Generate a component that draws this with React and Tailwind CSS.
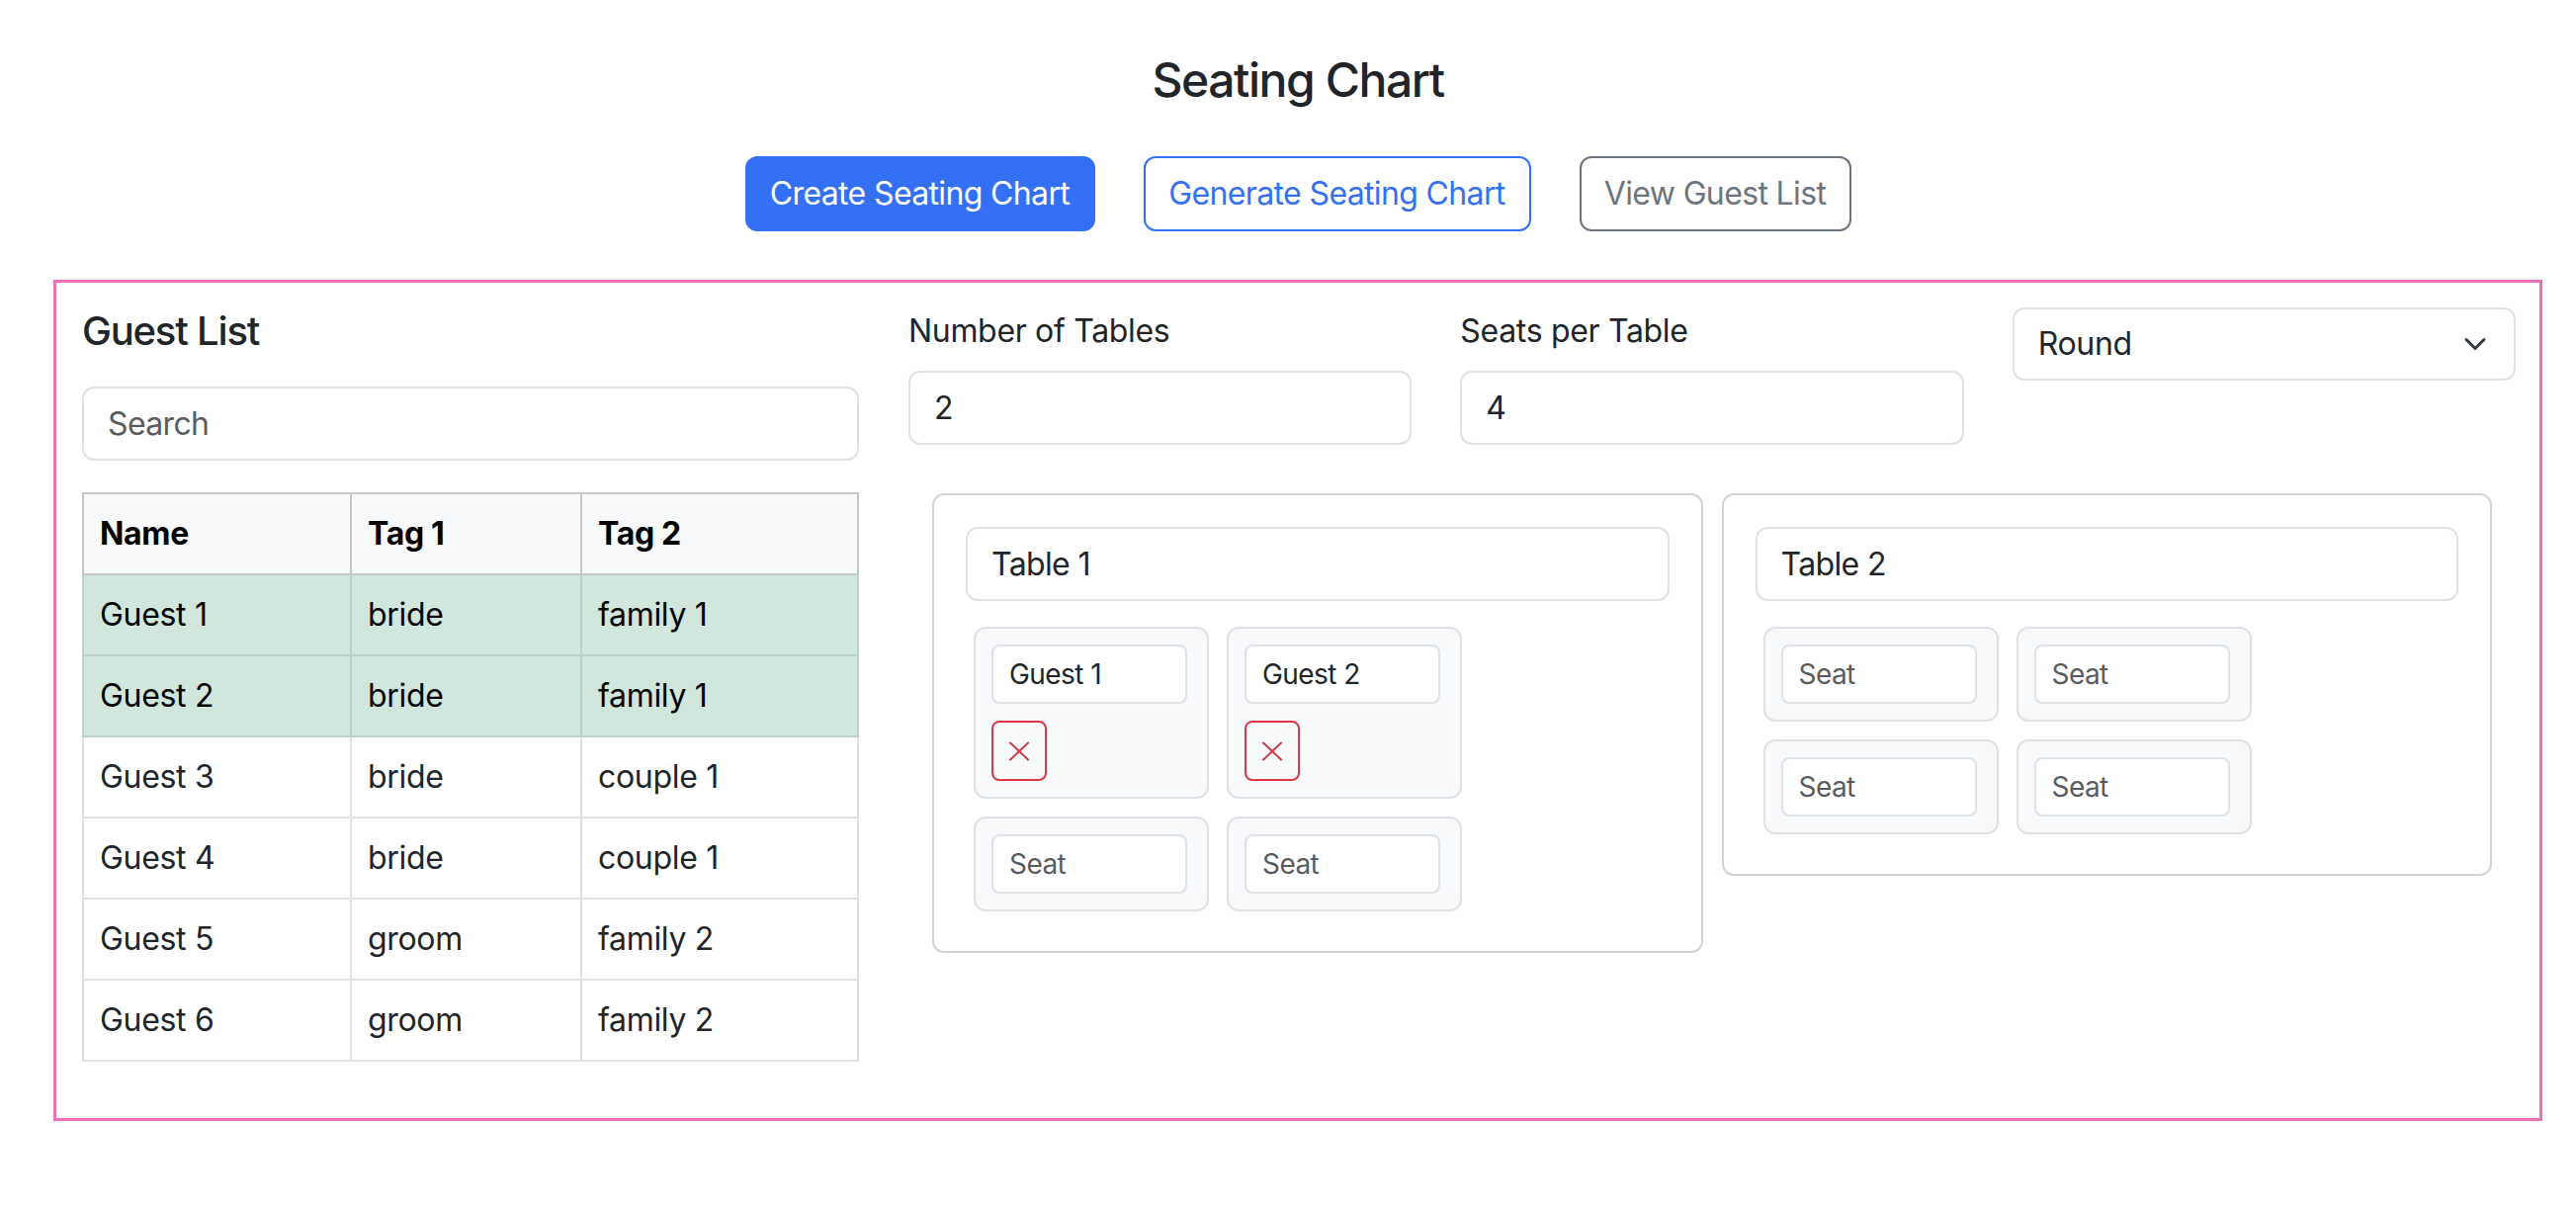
import React from "react";

const guests = [
  { name: "Guest 1", t1: "bride", t2: "family 1", hl: true },
  { name: "Guest 2", t1: "bride", t2: "family 1", hl: true },
  { name: "Guest 3", t1: "bride", t2: "couple 1", hl: false },
  { name: "Guest 4", t1: "bride", t2: "couple 1", hl: false },
  { name: "Guest 5", t1: "groom", t2: "family 2", hl: false },
  { name: "Guest 6", t1: "groom", t2: "family 2", hl: false },
];

function XIcon() {
  return (
    <svg width="22" height="20" viewBox="0 0 22 20" fill="none" stroke="#dc3545" strokeWidth="2" strokeLinecap="round">
      <line x1="2" y1="1.5" x2="20" y2="18.5" />
      <line x1="20" y1="1.5" x2="2" y2="18.5" />
    </svg>
  );
}

function Seat({ value }) {
  return (
    <div className="w-[238px] bg-[#f8f9fa] border-2 border-[#dee2e6] rounded-[12px] p-[16px]">
      <input
        className="block w-[198px] h-[60px] bg-white border-2 border-[#dee2e6] rounded-[8px] px-[16px] text-[28px] leading-[42px] tracking-[-0.02em] text-[#212529] placeholder:text-[#595c5f] outline-none"
        placeholder="Seat"
        defaultValue={value || ""}
      />
      {value ? (
        <button className="mt-[17px] w-[56px] h-[61px] border-2 border-[#dc3545] rounded-[8px] flex items-center justify-center bg-transparent">
          <XIcon />
        </button>
      ) : null}
    </div>
  );
}

function TableCard({ title, seats }) {
  return (
    <div className="flex-1 border-2 border-[#d3d3d3] rounded-[12px] p-[32px] bg-white">
      <input
        className="block w-full h-[75px] border-2 border-[#dee2e6] rounded-[12px] px-[24px] text-[32px] tracking-[-0.02em] text-[#212529] outline-none mb-[18px]"
        defaultValue={title}
      />
      <div className="flex flex-wrap gap-[18px] p-[8px]">
        {seats.map((s, i) => (
          <Seat key={i} value={s} />
        ))}
      </div>
    </div>
  );
}

export default function App() {
  return (
    <div className="min-h-screen w-full bg-white text-[#212529] font-['Inter',sans-serif] tracking-[-0.02em]">
      <div className="pt-[52px] ml-[54px] mr-[34px]">
        <h1 className="text-center text-[48px] leading-[58px] font-medium tracking-[-0.03em] mb-[48px]">Seating Chart</h1>
        <div className="flex justify-center gap-[49px] mb-[49px]">
          <button className="h-[76px] w-[354px] whitespace-nowrap bg-[#3470f4] border-2 border-[#3470f4] text-white rounded-[12px] text-[32px] leading-[48px] tracking-[-0.02em]">
            Create Seating Chart
          </button>
          <button className="h-[76px] w-[392px] whitespace-nowrap bg-white border-2 border-[#3470f4] text-[#3470f4] rounded-[12px] text-[32px] leading-[48px] tracking-[-0.02em]">
            Generate Seating Chart
          </button>
          <button className="h-[76px] w-[275px] whitespace-nowrap bg-white border-2 border-[#6c757d] text-[#6c757d] rounded-[12px] text-[32px] leading-[48px] tracking-[-0.02em]">
            View Guest List
          </button>
        </div>

        <div className="border-[3px] border-[#ee72b3] pl-[26px] pr-[24px] pt-[25px] pb-[57px]">
          <div className="flex gap-[50px] items-start">
            <div className="w-[786px] shrink-0">
              <h2 className="text-[40px] leading-[48px] font-medium tracking-[-0.03em] mb-[32px]">Guest List</h2>
              <input
                className="block w-full h-[75px] border-2 border-[#dee2e6] rounded-[12px] px-[24px] text-[32px] tracking-[-0.02em] placeholder:text-[#595c5f] outline-none mb-[32px]"
                placeholder="Search"
              />
              <table className="w-full table-fixed border-collapse text-[32px] leading-[48px]">
                <colgroup>
                  <col className="w-[271px]" />
                  <col className="w-[233px]" />
                  <col />
                </colgroup>
                <thead>
                  <tr>
                    <th className="border-2 border-[#c6c7c8] bg-[#f8f9fa] text-black font-bold text-left p-[16px]">Name</th>
                    <th className="border-2 border-[#c6c7c8] bg-[#f8f9fa] text-black font-bold text-left p-[16px]">Tag 1</th>
                    <th className="border-2 border-[#c6c7c8] bg-[#f8f9fa] text-black font-bold text-left p-[16px]">Tag 2</th>
                  </tr>
                </thead>
                <tbody>
                  {guests.map((g) =>
                    g.hl ? (
                      <tr key={g.name}>
                        <td className="border-2 border-[#bcd0c7] bg-[#d1e7dd] text-black p-[16px]">{g.name}</td>
                        <td className="border-2 border-[#bcd0c7] bg-[#d1e7dd] text-black p-[16px]">{g.t1}</td>
                        <td className="border-2 border-[#bcd0c7] bg-[#d1e7dd] text-black p-[16px]">{g.t2}</td>
                      </tr>
                    ) : (
                      <tr key={g.name}>
                        <td className="border-2 border-[#dee2e6] text-[#212529] p-[16px]">{g.name}</td>
                        <td className="border-2 border-[#dee2e6] text-[#212529] p-[16px]">{g.t1}</td>
                        <td className="border-2 border-[#dee2e6] text-[#212529] p-[16px]">{g.t2}</td>
                      </tr>
                    )
                  )}
                </tbody>
              </table>
            </div>

            <div className="flex-1 min-w-0">
              <div className="grid grid-cols-3 gap-x-[49px] items-start">
                <div>
                  <label className="block text-[32px] leading-[48px] mb-[16px]">Number of Tables</label>
                  <input
                    className="block w-full h-[75px] border-2 border-[#dee2e6] rounded-[12px] px-[24px] text-[32px] outline-none"
                    defaultValue="2"
                  />
                </div>
                <div>
                  <label className="block text-[32px] leading-[48px] mb-[16px]">Seats per Table</label>
                  <input
                    className="block w-full h-[75px] border-2 border-[#dee2e6] rounded-[12px] px-[24px] text-[32px] outline-none"
                    defaultValue="4"
                  />
                </div>
                <div className="h-[74px] border-2 border-[#dee2e6] rounded-[12px] pl-[24px] pr-[27px] flex items-center justify-between text-[32px]">
                  <span>Round</span>
                  <svg width="24" height="24" viewBox="0 0 16 16" fill="none" stroke="#343a40" strokeWidth="2" strokeLinecap="round" strokeLinejoin="round">
                    <path d="M2 5l6 6 6-6" />
                  </svg>
                </div>
              </div>

              <div className="mt-[49px] px-[24px] flex gap-[19px] items-start">
                <TableCard title="Table 1" seats={["Guest 1", "Guest 2", "", ""]} />
                <TableCard title="Table 2" seats={["", "", "", ""]} />
              </div>
            </div>
          </div>
        </div>
      </div>
    </div>
  );
}
